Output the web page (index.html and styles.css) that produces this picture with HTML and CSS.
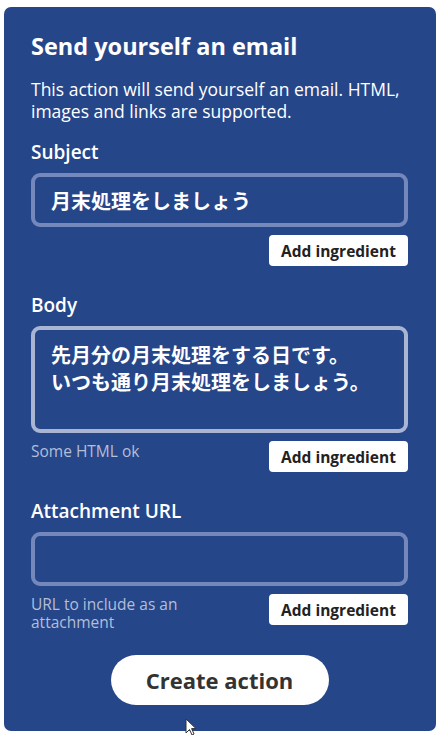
FILE: index.html
```html
<!DOCTYPE html>
<html lang="ja">
<head>
  <meta charset="UTF-8">
  <meta name="viewport" content="width=device-width, initial-scale=1.0">
  <title>Send yourself an email</title>
  <link rel="stylesheet" href="styles.css">
</head>
<body>
  <div class="card">
    <h1>Send yourself an email</h1>
    <p class="desc">This action will send yourself an email. HTML, images and links are supported.</p>

    <div class="field">
      <label class="label">Subject</label>
      <div class="input">月末処理をしましょう</div>
      <div class="row">
        <span class="helper"></span>
        <button class="ingredient">Add ingredient</button>
      </div>
    </div>

    <div class="field">
      <label class="label">Body</label>
      <div class="input textarea focused">先月分の月末処理をする日です。<br>いつも通り月末処理をしましょう。</div>
      <div class="row">
        <span class="helper">Some HTML ok</span>
        <button class="ingredient">Add ingredient</button>
      </div>
    </div>

    <div class="field">
      <label class="label">Attachment URL</label>
      <div class="input"></div>
      <div class="row">
        <span class="helper">URL to include as an attachment</span>
        <button class="ingredient">Add ingredient</button>
      </div>
    </div>

    <div class="actions">
      <button class="create">Create action</button>
    </div>

    <!-- mouse pointer caught in the screenshot -->
    <svg class="cursor" width="12" height="18" viewBox="0 0 12 18">
      <path d="M1 1 L1 15 L4.5 11.5 L7 17 L9 16 L6.6 10.6 L11 10.6 Z" fill="#fff" stroke="#333" stroke-width="1"/>
    </svg>
  </div>
</body>
</html>
```

FILE: styles.css
```css
body {
  margin: 0;
  padding: 7px 6px 4px 4px;
  background: #fff;
  font-family: "Open Sans", "Noto Sans CJK JP", sans-serif;
}

.card {
  position: relative;
  background: #26468a;
  border-radius: 7px;
  padding: 24px 28px 26px 27px;
  color: #fff;
}

h1 {
  margin: 0;
  font-size: 23.5px;
  line-height: 30px;
  font-weight: 700;
}

.desc {
  margin: 17px 0 0;
  font-size: 17.5px;
  line-height: 22px;
}

.field {
  margin-top: 18px;
}

.field + .field {
  margin-top: 27px;
}

.label {
  display: block;
  font-size: 19px;
  line-height: 24px;
  font-weight: 600;
}

.input {
  margin-top: 9px;
  height: 54px;
  box-sizing: border-box;
  border: 4px solid #7588bb;
  border-radius: 9px;
  padding: 0 16px;
  display: flex;
  align-items: center;
  font-family: "Noto Sans CJK JP", sans-serif;
  font-size: 20px;
  font-weight: 700;
}

.textarea {
  height: 107px;
  display: block;
  padding: 11px 16px;
  line-height: 27px;
}

.focused {
  border-color: #a9b5d3;
}

.row {
  display: flex;
  justify-content: space-between;
  align-items: flex-start;
  margin-top: 8px;
}

.helper {
  max-width: 200px;
  font-size: 15.5px;
  line-height: 18px;
  color: #b3bed7;
  padding-top: 1px;
}

.ingredient {
  flex-shrink: 0;
  width: 139px;
  height: 31px;
  padding: 0;
  border: 0;
  border-radius: 4px;
  background: #fff;
  color: #222;
  font-family: "Open Sans", sans-serif;
  font-size: 15.5px;
  font-weight: 700;
}

.actions {
  display: flex;
  justify-content: center;
  margin-top: 24px;
}

.create {
  width: 218px;
  height: 50px;
  border: 0;
  border-radius: 25px;
  background: #fff;
  color: #333;
  font-family: "Open Sans", sans-serif;
  font-size: 22px;
  font-weight: 700;
}

.cursor {
  position: absolute;
  left: 181px;
  top: 711px;
}
```
